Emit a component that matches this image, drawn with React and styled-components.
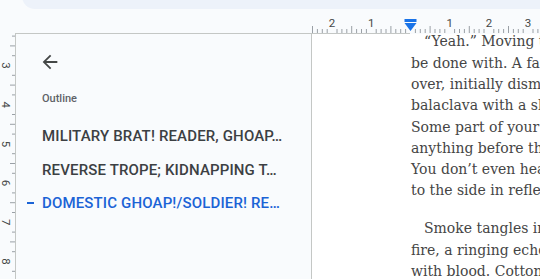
import React from 'react';
import styled, { createGlobalStyle } from 'styled-components';

const INCH = 39.2;
const H_ORIGIN = 410.5;
const V_ORIGIN = 65.5 - 3 * INCH - 34;

const outline = [
  { title: 'MILITARY BRAT! READER, GHOAP…', active: false },
  { title: 'REVERSE TROPE; KIDNAPPING T…', active: false },
  { title: 'DOMESTIC GHOAP!/SOLDIER! RE…', active: true }
];

const paragraphs = [
  [
    '“Yeah.” Moving to the next body, you',
    'be done with. A familiar face, perhaps,',
    'over, initially dismissing the man in the',
    'balaclava with a skull painted across it.',
    'Some part of your mind registers it,',
    'anything before that — the fear is gone.',
    'You don’t even hear the shot. You flinch',
    'to the side in reflex, the round cracking'
  ],
  [
    'Smoke tangles in the air, the smell of gun',
    'fire, a ringing echo in your ears, hands slick',
    'with blood. Cotton in your mouth, grit on'
  ]
];

function TopRuler() {
  const ticks = [];
  const numbers = [];
  for (let i = -20; i <= 26; i++) {
    const x = H_ORIGIN + (i * INCH) / 8;
    if (i % 8 === 0) {
      if (i !== 0) numbers.push({ x, n: Math.abs(i / 8) });
      continue;
    }
    ticks.push({ x, long: i % 4 === 0 });
  }

  return (
    <svg width="540" height="25" viewBox="0 0 540 25">
      <line x1="15" y1="24.5" x2="410" y2="24.5" stroke="#c4c7c5" />
      {ticks.map((t) => (
        <line
          key={t.x}
          x1={t.x}
          x2={t.x}
          y1={t.long ? 17 : 20}
          y2="24"
          stroke="#9aa0a6"
          strokeWidth="1"
        />
      ))}
      {numbers.map((t) => (
        <text
          key={t.x}
          x={t.x}
          y="17.5"
          fontSize="11.5"
          fontFamily="Roboto, sans-serif"
          fill="#444746"
          textAnchor="middle"
        >
          {t.n}
        </text>
      ))}
      <rect x="404.5" y="10" width="12" height="3" fill="#1a73e8" />
      <polygon points="404.5,14 416.5,14 410.5,22" fill="#1a73e8" />
    </svg>
  );
}

function SideRuler() {
  const ticks = [];
  const numbers = [];
  for (let i = 1; i <= 40; i++) {
    const y = V_ORIGIN + (i * INCH) / 4;
    if (y < 0 || y > 246) continue;
    if (i % 4 === 0) {
      numbers.push({ y, n: i / 4 });
      continue;
    }
    ticks.push({ y, long: i % 2 === 0 });
  }

  return (
    <svg width="15" height="246" viewBox="0 0 15 246">
      {ticks.map((t) => (
        <line
          key={t.y}
          x1={t.long ? 10 : 12}
          x2="15"
          y1={t.y}
          y2={t.y}
          stroke="#9aa0a6"
        />
      ))}
      {numbers.map((t) => (
        <text
          key={t.y}
          x="5.5"
          y={t.y + 4}
          fontSize="11.5"
          fontFamily="Roboto, sans-serif"
          fill="#444746"
          textAnchor="middle"
          transform={`rotate(90 5.5 ${t.y})`}
        >
          {t.n}
        </text>
      ))}
    </svg>
  );
}

function BackArrow() {
  return (
    <svg width="22" height="22" viewBox="0 0 24 24" fill="#444746">
      <path d="M20 11H7.83l5.59-5.59L12 4l-8 8 8 8 1.41-1.41L7.83 13H20v-2z" />
    </svg>
  );
}

export default function App() {
  return (
    <>
      <GlobalStyle />
      <Frame>
        <Toolbar />
        <RulerBar>
          <TopRuler />
        </RulerBar>
        <Main>
          <VRuler>
            <SideRuler />
          </VRuler>
          <OutlinePanel>
            <BackButton aria-label="Close outline">
              <BackArrow />
            </BackButton>
            <PanelLabel>Outline</PanelLabel>
            <HeadingList>
              {outline.map((item) => (
                <Heading key={item.title} active={item.active}>
                  {item.active && <ActiveDash />}
                  <span>{item.title}</span>
                </Heading>
              ))}
            </HeadingList>
          </OutlinePanel>
          <Page>
            <Body>
              {paragraphs.map((lines, p) => (
                <Paragraph key={p}>
                  {lines.map((line, i) => (
                    <Line key={i} first={i === 0}>
                      {line}
                    </Line>
                  ))}
                </Paragraph>
              ))}
            </Body>
          </Page>
        </Main>
      </Frame>
    </>
  );
}

const GlobalStyle = createGlobalStyle`
  html, body {
    margin: 0;
    padding: 0;
    background: #f9fbfd;
    overflow: hidden;
  }
`;

const Frame = styled.div`
  width: 540px;
  height: 279px;
  display: flex;
  flex-direction: column;
  overflow: hidden;
  background: #f9fbfd;
  font-family: Roboto, "Liberation Sans", sans-serif;
`;

const Toolbar = styled.div`
  flex-shrink: 0;
  height: 22px;
  margin: -13px 0 0 22px;
  background: #edf2fa;
  border-bottom-left-radius: 13px;
`;

const RulerBar = styled.div`
  flex-shrink: 0;
  height: 25px;

  svg {
    display: block;
  }
`;

const Main = styled.div`
  flex: 1;
  display: flex;
  min-height: 0;
`;

const VRuler = styled.div`
  width: 15px;
  flex-shrink: 0;

  svg {
    display: block;
  }
`;

const OutlinePanel = styled.aside`
  box-sizing: border-box;
  width: 297px;
  flex-shrink: 0;
  padding: 17px 0 0 26px;
  background: #f9fbfd;
  border-left: 1px solid #c4c7c5;
  border-right: 1px solid #c4c7c5;
  display: flex;
  flex-direction: column;
  align-items: flex-start;
`;

const BackButton = styled.button`
  width: 22px;
  height: 22px;
  margin-left: -3px;
  padding: 0;
  border: none;
  background: none;
  display: flex;
  cursor: pointer;
`;

const PanelLabel = styled.div`
  margin-top: 18px;
  font-size: 11px;
  line-height: 16px;
  font-weight: 500;
  color: #5f6368;
`;

const HeadingList = styled.ul`
  list-style: none;
  margin: 19px 0 0;
  padding: 0;
  display: flex;
  flex-direction: column;
  gap: 13.5px;
`;

const Heading = styled.li`
  display: flex;
  align-items: center;
  gap: 8px;
  margin-left: ${(props) => (props.active ? '-15px' : '0')};
  font-size: 15px;
  line-height: 20px;
  font-weight: 500;
  letter-spacing: 0.15px;
  white-space: nowrap;
  color: ${(props) => (props.active ? '#1b63d6' : '#3c4043')};
`;

const ActiveDash = styled.span`
  width: 7px;
  height: 2px;
  background: #1b63d6;
`;

const Page = styled.main`
  flex: 1;
  min-width: 0;
  background: #ffffff;
  padding-left: 99px;
  overflow: hidden;
`;

const Body = styled.div`
  margin-top: -2.6px;
  font-family: "DejaVu Serif", "Liberation Serif", serif;
  font-size: 14px;
  line-height: 21.3px;
  color: #454545;
`;

const Paragraph = styled.p`
  margin: 0 0 16.7px;
`;

const Line = styled.span`
  display: block;
  white-space: nowrap;
  padding-left: ${(props) => (props.first ? '13px' : '0')};
`;
